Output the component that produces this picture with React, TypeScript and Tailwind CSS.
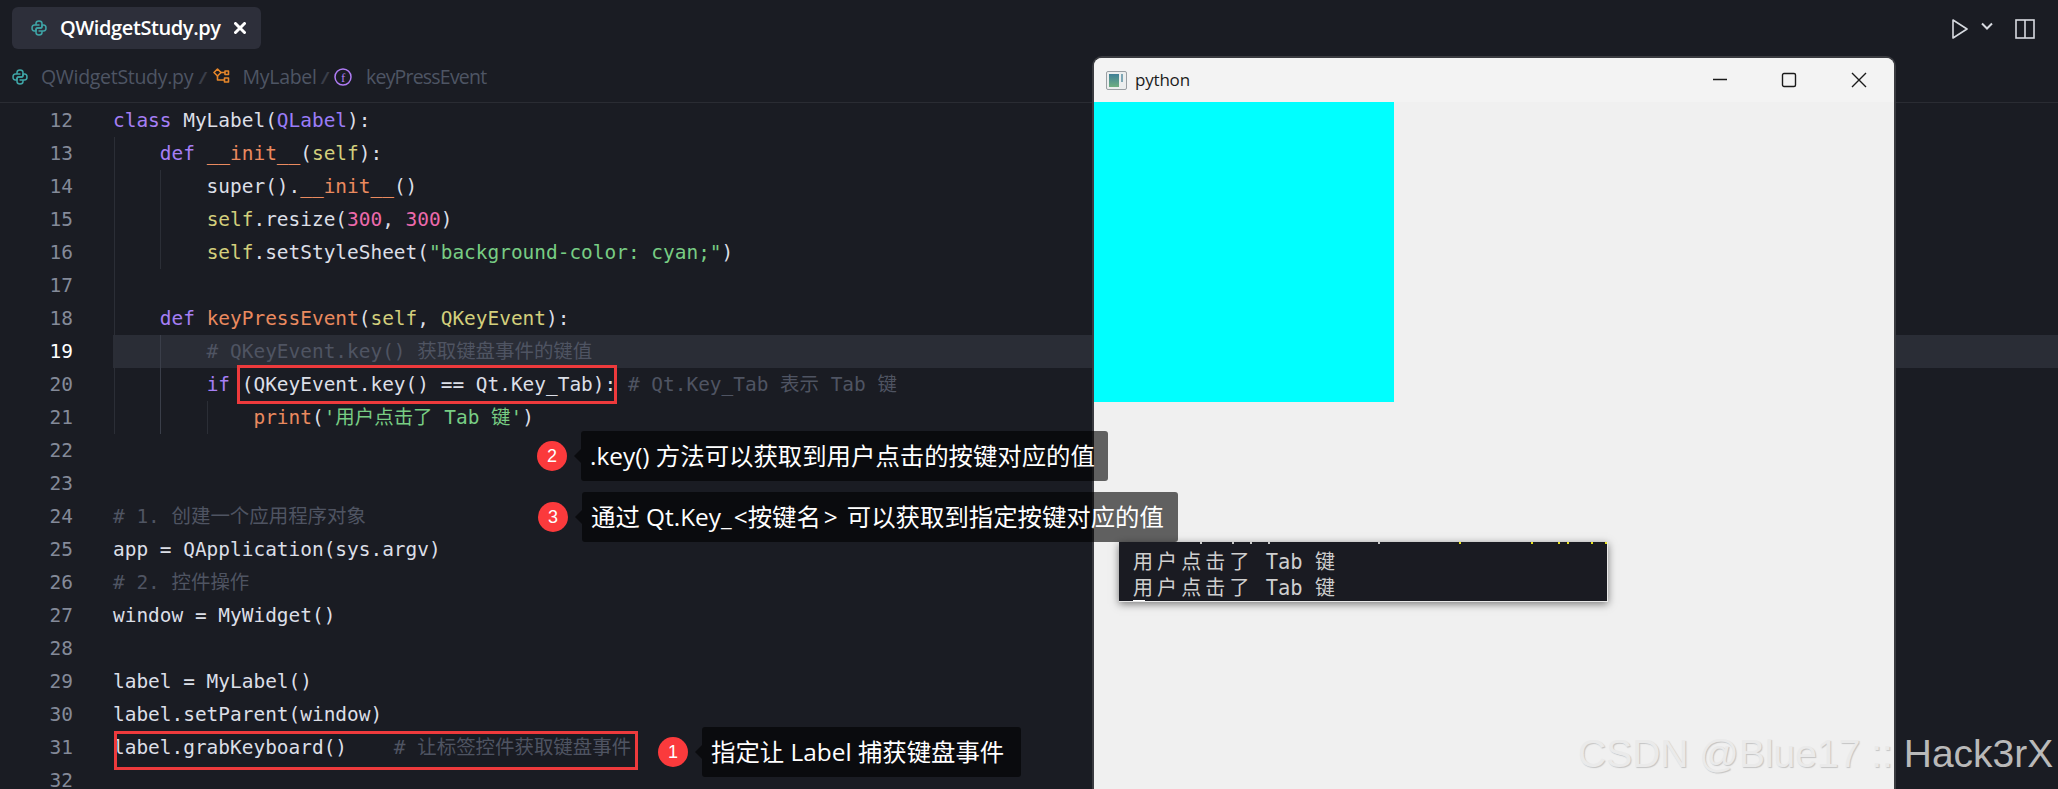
import React from "react";

const PLAIN = "text-[#dcdfe7]";
const KEYWORD = "text-[#a67ff5]";
const TYPE = "text-[#9a7cf8]";
const FUNC = "text-[#ea8a5f]";
const SELF = "text-[#d3cf7c]";
const NUM = "text-[#ec6aac]";
const STR = "text-[#78cd84]";
const COMMENT = "text-[#4f5462]";

type Token = [string, string];

const lines: Token[][] = [
    [[KEYWORD, "class "], [PLAIN, "MyLabel("], [TYPE, "QLabel"], [PLAIN, "):"]],
    [[PLAIN, "    "], [KEYWORD, "def "], [FUNC, "__init__"], [PLAIN, "("], [SELF, "self"], [PLAIN, "):"]],
    [[PLAIN, "        super()."], [FUNC, "__init__"], [PLAIN, "()"]],
    [[PLAIN, "        "], [SELF, "self"], [PLAIN, ".resize("], [NUM, "300"], [PLAIN, ", "], [NUM, "300"], [PLAIN, ")"]],
    [[PLAIN, "        "], [SELF, "self"], [PLAIN, ".setStyleSheet("], [STR, '"background-color: cyan;"'], [PLAIN, ")"]],
    [],
    [[PLAIN, "    "], [KEYWORD, "def "], [FUNC, "keyPressEvent"], [PLAIN, "("], [SELF, "self"], [PLAIN, ", "], [SELF, "QKeyEvent"], [PLAIN, "):"]],
    [[COMMENT, "        # QKeyEvent.key() 获取键盘事件的键值"]],
    [[PLAIN, "        "], [KEYWORD, "if "], [PLAIN, "(QKeyEvent.key() == Qt.Key_Tab): "], [COMMENT, "# Qt.Key_Tab 表示 Tab 键"]],
    [[PLAIN, "            "], [FUNC, "print"], [PLAIN, "("], [STR, "'用户点击了 Tab 键'"], [PLAIN, ")"]],
    [],
    [],
    [[COMMENT, "# 1. 创建一个应用程序对象"]],
    [[PLAIN, "app = QApplication(sys.argv)"]],
    [[COMMENT, "# 2. 控件操作"]],
    [[PLAIN, "window = MyWidget()"]],
    [],
    [[PLAIN, "label = MyLabel()"]],
    [[PLAIN, "label.setParent(window)"]],
    [[PLAIN, "label.grabKeyboard()    "], [COMMENT, "# 让标签控件获取键盘事件"]],
    [],
];

const consoleTicks: [number, string][] = [
    [81, "bg-[#c8c8c8]"],
    [113, "bg-[#c8c8c8]"],
    [131, "bg-[#c8c8c8]"],
    [149, "bg-[#c8c8c8]"],
    [259, "bg-[#c8c8c8]"],
    [340, "bg-[#e6e01c]"],
    [412, "bg-[#e6e01c]"],
    [439, "bg-[#e6e01c]"],
    [448, "bg-[#e6e01c]"],
    [472, "bg-[#e6e01c]"],
    [486, "bg-[#e6e01c]"],
];

function PythonIcon() {
    return (
        <svg viewBox="0 0 16 16" className="h-4 w-4 shrink-0" fill="none" stroke="#3fa5a7" strokeWidth="1.5" strokeLinejoin="round">
            <path d="M8.5 5H3.5C2 5 1 6.2 1 8C1 9.8 2 11 3.5 11H5V9.5C5 8.6 5.6 8 6.5 8H9.5C10.4 8 11 7.4 11 6.5V3.5C11 2 9.8 1 8 1C6.2 1 5 2 5 3.5V5" />
            <path d="M7.5 11H12.5C14 11 15 9.8 15 8C15 6.2 14 5 12.5 5H11V6.5C11 7.4 10.4 8 9.5 8H6.5C5.6 8 5 8.6 5 9.5V12.5C5 14 6.2 15 8 15C9.8 15 11 14 11 12.5V11" />
        </svg>
    );
}

function Slash() {
    return <span className="text-[#3a3e49] text-[16px] font-bold italic">/</span>;
}

function Callout({ n, left, top, width, children }: { n: number; left: string; top: string; width: string; children: React.ReactNode }) {
    return (
        <div className={`absolute flex items-center gap-[14px] h-[50px] ${left} ${top}`}>
            <div className="w-[30px] h-[30px] rounded-full bg-[#fb3a3c] flex items-center justify-center text-white text-[18px] font-['Liberation_Sans',sans-serif]">
                {n}
            </div>
            <div className={`relative h-[50px] ${width} rounded-[3px] bg-black/60 pl-[9px] flex items-center whitespace-pre text-white text-[24.4px] font-['Open_Sans','Noto_Sans_CJK_SC',sans-serif]`}>
                <span className="absolute left-[-7px] top-[18px] w-0 h-0 border-y-[7px] border-y-transparent border-r-[7px] border-r-black/60" />
                {children}
            </div>
        </div>
    );
}

export default function App() {
    return (
        <div className="relative w-[2058px] h-[789px] overflow-hidden bg-[#1a1c23]">
            {/* Tab bar */}
            <div className="h-[54px] pt-[7px] pl-[12px] pr-[23px] flex items-start justify-between">
                <div className="h-[42px] w-[249px] rounded-[6px] bg-[#2d2f3a] flex items-center pl-[19px]">
                    <PythonIcon />
                    <span className="ml-[13px] text-white text-[20px] font-semibold tracking-[-0.4px] font-['Open_Sans',sans-serif]">QWidgetStudy.py</span>
                    <svg viewBox="0 0 12 12" className="ml-auto mr-[15px] w-3 h-3" stroke="#ffffff" strokeWidth="3" strokeLinecap="round">
                        <path d="M1.5 1.5L10.5 10.5M10.5 1.5L1.5 10.5" />
                    </svg>
                </div>
                <div className="flex items-center h-[42px] pt-[1px]">
                    <svg viewBox="0 0 16 20" className="w-[16px] h-[20px]" fill="none" stroke="#d7dae0" strokeWidth="1.6" strokeLinejoin="round">
                        <path d="M1 1L15 10L1 19Z" />
                    </svg>
                    <svg viewBox="0 0 12 8" className="ml-[13px] mb-[5px] w-[12px] h-[8px]" fill="none" stroke="#d7dae0" strokeWidth="2">
                        <path d="M1 1.5L6 6.5L11 1.5" />
                    </svg>
                    <svg viewBox="0 0 20 20" className="ml-[22px] w-[20px] h-[20px]" fill="none" stroke="#d7dae0" strokeWidth="1.6">
                        <rect x="1" y="1" width="18" height="18" />
                        <path d="M10 1V19" />
                    </svg>
                </div>
            </div>

            {/* Breadcrumb */}
            <div className="h-[49px] pb-[3px] pl-[12px] flex items-center border-b border-[#2a2c33] text-[#4e5564] text-[19.5px] font-['Open_Sans',sans-serif] tracking-[-0.3px]">
                <PythonIcon />
                <span className="ml-[13px]">QWidgetStudy.py</span>
                <span className="ml-[6px]"><Slash /></span>
                <svg viewBox="0 0 17 17" className="ml-[7px] w-[17px] h-[17px]" fill="none" stroke="#e6862a" strokeWidth="1.6" strokeLinejoin="round">
                    <path d="M1 4.5L4.5 1L8 4.5L4.5 8Z" />
                    <path d="M4.5 8V12H11M7 4.5H12" />
                    <rect x="12" y="3" width="3.5" height="3.5" />
                    <rect x="11.5" y="10" width="4" height="4" />
                </svg>
                <span className="ml-[13px]">MyLabel</span>
                <span className="ml-[5px]"><Slash /></span>
                <svg viewBox="0 0 18 18" className="ml-[6px] w-[18px] h-[18px]">
                    <circle cx="9" cy="9" r="8" fill="none" stroke="#b07cf5" strokeWidth="1.5" />
                    <text x="9" y="13.5" textAnchor="middle" fontSize="13" fill="#b07cf5" fontFamily="Liberation Serif">f</text>
                </svg>
                <span className="ml-[14px] tracking-[-0.8px]">keyPressEvent</span>
            </div>

            {/* Code */}
            <div className="relative pt-[1px] font-['DejaVu_Sans_Mono','Noto_Sans_CJK_SC',monospace] text-[19.45px] leading-[33px]">
                {lines.map((tokens, i) => (
                    <div key={i} className="flex h-[33px]">
                        <div className={`w-[73px] text-right shrink-0 ${i === 7 ? "text-white" : "text-[#848a99]"}`}>{i + 12}</div>
                        <div className={`ml-[40px] flex-1 whitespace-pre ${i === 7 ? "bg-[#2a2d36]" : ""}`}>
                            {tokens.map(([color, text], j) => (
                                <span key={j} className={color}>{text}</span>
                            ))}
                        </div>
                    </div>
                ))}

                {/* Indent guides */}
                <div className="absolute left-[114px] top-[34px] w-px h-[297px] bg-[#2b2e36]" />
                <div className="absolute left-[160px] top-[67px] w-px h-[99px] bg-[#2b2e36]" />
                <div className="absolute left-[160px] top-[232px] w-px h-[99px] bg-[#3a3e49]" />
                <div className="absolute left-[207px] top-[298px] w-px h-[33px] bg-[#2b2e36]" />
            </div>

            {/* Red annotation boxes */}
            <div className="absolute left-[237px] top-[365px] w-[380px] h-[39px] border-[3px] border-[#ee3a3c]" />
            <div className="absolute left-[114px] top-[731px] w-[524px] h-[39px] border-[3px] border-[#ee3a3c]" />

            {/* Running Qt window */}
            <div className="absolute left-[1092px] top-[56px] w-[804px] h-[733px] flex flex-col border-2 border-b-0 border-[#3a3b40] rounded-t-[10px] overflow-hidden bg-[#f0f0f0]">
                <div className="h-[44px] bg-[#f3f3f3] shrink-0 flex items-center pl-[12px] pr-[27px]">
                    <div className="w-[21px] h-[19px] border border-[#9a9fa3] rounded-[2px] bg-[#eceeee] p-[2px] flex gap-[2px]">
                        <div className="w-[10px] h-full bg-gradient-to-b from-[#3f7f96] to-[#6fae7f]" />
                        <div className="w-[2px] h-[8px] bg-[#7fa7b5]" />
                    </div>
                    <span className="ml-[8px] text-[#1c1c1c] text-[17px] font-['Open_Sans',sans-serif] tracking-[-0.2px]">python</span>
                    <div className="ml-auto flex items-center">
                        <svg viewBox="0 0 16 16" className="w-4 h-4" stroke="#1a1a1a" strokeWidth="1.4"><path d="M1 7.5H15" /></svg>
                        <svg viewBox="0 0 16 16" className="ml-[53px] w-4 h-4" fill="none" stroke="#1a1a1a" strokeWidth="1.4"><rect x="1.5" y="1.5" width="13" height="13" rx="1.5" /></svg>
                        <svg viewBox="0 0 16 16" className="ml-[54px] w-4 h-4" fill="none" stroke="#1a1a1a" strokeWidth="1.4"><path d="M1 1L15 15M15 1L1 15" /></svg>
                    </div>
                </div>
                <div className="flex-1">
                    <div className="w-[300px] h-[300px] bg-[#00ffff]" />
                </div>
            </div>

            {/* Console window */}
            <div className="absolute left-[1119px] top-[542px] w-[489px] h-[60px] bg-[#1a1b22] border-r border-b border-[#e8e8e8] shadow-[0_2px_8px_rgba(0,0,0,0.5)] pl-[14px] pt-[7px] font-['DejaVu_Sans_Mono','Noto_Sans_CJK_SC',monospace] text-[#cfcfcf] text-[20.4px] leading-[26px] whitespace-pre">
                {consoleTicks.map(([x, color]) => (
                    <span key={x} className={`absolute top-0 w-[2px] h-[2px] ${color}`} style={{ left: x }} />
                ))}
                <div><span className="text-[20px] tracking-[4.1px]">用户点击了</span> Tab <span className="text-[20px]">键</span></div>
                <div><span className="text-[20px] tracking-[4.1px]">用户点击了</span> Tab <span className="text-[20px]">键</span></div>
                <span className="absolute left-[14px] bottom-0 w-[12px] h-[1px] bg-white" />
            </div>

            {/* Callouts */}
            <Callout n={2} left="left-[537px]" top="top-[431px]" width="w-[527px]">.key() 方法可以获取到用户点击的按键对应的值</Callout>
            <Callout n={3} left="left-[538px]" top="top-[492px]" width="w-[596px]">
                <span>通过 Qt.Key_</span>
                <span className="ml-[2px]">&lt;按键名</span>
                <span className="ml-[3px]">&gt;</span>
                <span className="ml-[9px]">可以获取到指定按键对应的值</span>
            </Callout>
            <Callout n={1} left="left-[658px]" top="top-[727px]" width="w-[319px]">指定让 Label 捕获键盘事件</Callout>

            {/* Watermark */}
            <div className="absolute left-[1578px] top-[734px] text-[39px] leading-[40px] whitespace-pre font-['Liberation_Sans',sans-serif]">
                <span className="text-[#eaeaea] [text-shadow:1px_1px_1px_#c4c4c4]">CSDN @Blue17 :: </span>
                <span className="text-[#b9b9b9]">Hack3rX</span>
            </div>
        </div>
    );
}
